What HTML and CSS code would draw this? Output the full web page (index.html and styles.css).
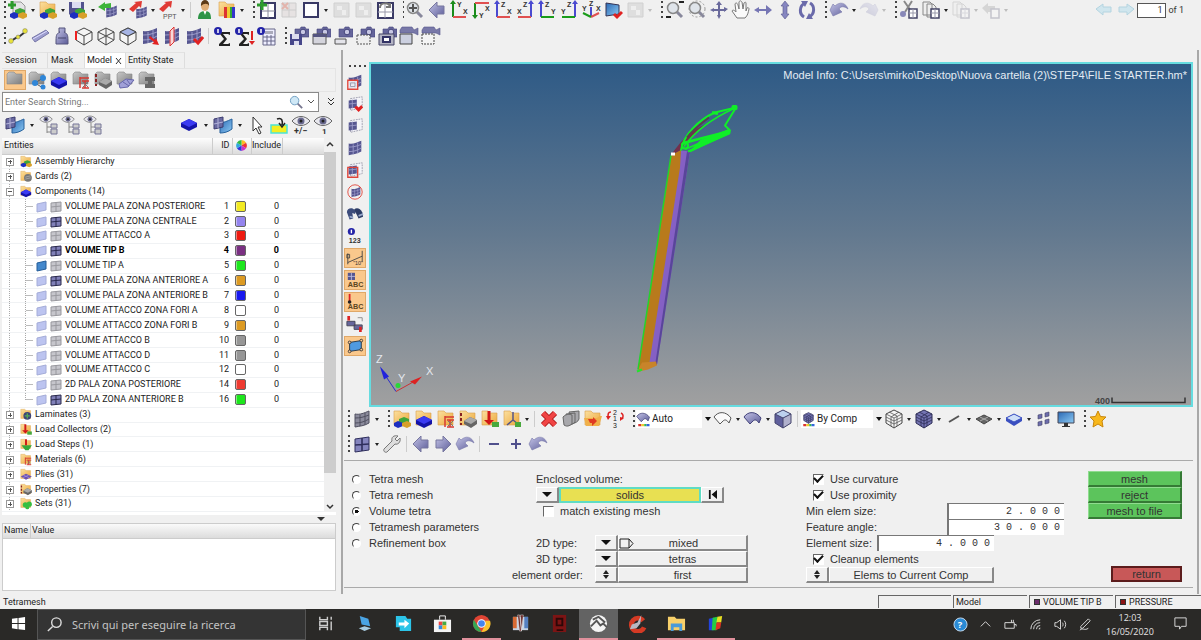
FILE: index.html
```html
<!DOCTYPE html>
<html lang="en">
<head>
<meta charset="utf-8">
<title>Tetramesh</title>
<link rel="stylesheet" href="styles.css">
</head>
<body>
<svg class="defs" aria-hidden="true">
<defs>
<linearGradient id="gf" x1="0" y1="0" x2="1" y2="1"><stop offset="0" stop-color="#fbe0a0"/><stop offset="1" stop-color="#eda93c"/></linearGradient>
<linearGradient id="gg" x1="0" y1="0" x2="1" y2="1"><stop offset="0" stop-color="#c9c9c9"/><stop offset="1" stop-color="#7d7d7d"/></linearGradient>
<linearGradient id="gp" x1="0" y1="0" x2="1" y2="1"><stop offset="0" stop-color="#c3c3e6"/><stop offset="1" stop-color="#5c5c98"/></linearGradient>
<linearGradient id="gb" x1="0" y1="0" x2="1" y2="1"><stop offset="0" stop-color="#2b69b4"/><stop offset="1" stop-color="#8ccaf4"/></linearGradient>
</defs>
<symbol id="folder" viewBox="0 0 20 20"><path d="M2 2h6l2 2h7v12H2z" fill="url(#gf)" stroke="#d9a04a" stroke-width=".6"/></symbol>
<symbol id="gfolder" viewBox="0 0 20 20"><path d="M2 4l2-2h5l2 2h6v10H2z" fill="url(#gg)" stroke="#888" stroke-width=".6"/></symbol>
<symbol id="blocks" viewBox="0 0 20 20"><path d="M7 10l5-2 5 2v3l-5 2-5-2z" fill="#3fa53a"/><path d="M2 14l4-2 5 2v3l-5 2-4-2z" fill="#1d2fc0"/><path d="M10 14l5-2 4 2v3l-4 2-5-2z" fill="#d8a02a"/></symbol>
<symbol id="bluebox" viewBox="0 0 20 20"><path d="M2 11l8-4 8 4v4l-8 4-8-4z" fill="#1414a8"/><path d="M2 11l8-4 8 4-8 4z" fill="#3a3af2"/></symbol>
<symbol id="mesh" viewBox="0 0 20 20"><path d="M3 5c5 1 9-1 14-3v12c-5 3-9 3-14 4z" fill="#565690"/><path d="M3 9c5 0 9-1 14-3M3 14c5 0 9-1 14-4M8 6v11M13 4v12" stroke="#9c9cca" fill="none"/></symbol>
<symbol id="qmesh" viewBox="0 0 20 20"><path d="M3 5l14-2v13L3 18z" fill="#8484bd" stroke="#2e2e5c"/><path d="M3 11l14-1M10 4v13" stroke="#2e2e5c" stroke-width="1.6"/></symbol>
<symbol id="gmesh" viewBox="0 0 20 20"><path d="M3 5c5 1 9-1 14-3v12c-5 3-9 3-14 4z" fill="#8b8b9c" stroke="#505060"/><path d="M3 9c5 0 9-1 14-3M3 14c5 0 9-1 14-4M8 6v11M13 4v12" stroke="#505060" fill="none"/></symbol>
<symbol id="mesh-w" viewBox="0 0 20 20"><path d="M5 4l13-2v12L5 17z" fill="#f4f4f8" stroke="#99a" stroke-dasharray="2 1"/><path d="M3 6l9-1v9l-9 1z" fill="#565690"/><path d="M3 10l9-1M7 5v10" stroke="#9c9cca"/></symbol>
<symbol id="new" viewBox="0 0 20 20"><path d="M5 2h8l4 4v10H5z" fill="#e4e4e6" stroke="#999"/><use href="#blocks"/><path d="M4 1v8M0 5h8" stroke="#2c9c2c" stroke-width="3"/></symbol>
<symbol id="open" viewBox="0 0 20 20"><use href="#folder"/><use href="#blocks"/></symbol>
<symbol id="save" viewBox="0 0 20 20"><path d="M1 2h15v14H3l-2-2z" fill="#52528e"/><path d="M4 2h9v6H4z" fill="#dcdcf2"/><use href="#blocks"/></symbol>
<symbol id="import" viewBox="0 0 20 20"><g transform="translate(6 4) scale(.75)"><use href="#mesh" width="20" height="20"/></g><path d="M14 0v5H8v3L1 4 8-1v2z" fill="#3eb53a" transform="translate(-1 3)"/></symbol>
<symbol id="rarrow" viewBox="0 0 20 20"><path d="M1 9l7-6-2-1 8-1-1 7-2-2-6 6z" fill="#e03a34"/></symbol>
<symbol id="export" viewBox="0 0 20 20"><g transform="translate(6 5) scale(.75)"><use href="#mesh" width="20" height="20"/></g><use href="#rarrow"/></symbol>
<symbol id="user" viewBox="0 0 20 20"><path d="M3 19c0-6 3-8 7-8s6 2 6 8z" fill="#2d9446"/><path d="M8 10l2 5 2-5z" fill="#fff"/><ellipse cx="10" cy="6" rx="4" ry="5" fill="#e0ae76"/><path d="M6 6c-1-8 9-8 8 0-1-3-5-3-8 0z" fill="#5c3a16"/></symbol>
<symbol id="colors" viewBox="0 0 20 20"><use href="#folder"/><path d="M7 7h3v11H7z" fill="#d33"/><path d="M10 7h3v11h-3z" fill="#ec3"/><path d="M13 7h2v11h-2z" fill="#3a3"/><path d="M15 7h3v11h-3z" fill="#33c"/></symbol>
<symbol id="winplus" viewBox="0 0 20 20"><path d="M4 3h14v15H4z" fill="#fff" stroke="#3a3a66" stroke-width="2"/><path d="M11 4v14M5 11h13" stroke="#889"/><path d="M5 0v10M0 5h10" stroke="#2c9c2c" stroke-width="3"/></symbol>
<symbol id="winx" viewBox="0 0 20 20"><path d="M3 3h14v14H3z" fill="#e6e2e2" stroke="#ccc"/><path d="M10 3v14M3 10h14" stroke="#ccc"/><path d="M3 3l6 6M9 3L3 9" stroke="#e2b4ac" stroke-width="2"/></symbol>
<symbol id="win" viewBox="0 0 20 20"><path d="M3 3h14v14H3z" fill="#fff" stroke="#3a3a66" stroke-width="2"/></symbol>
<symbol id="wingray" viewBox="0 0 20 20"><path d="M3 3h15v14H3z" fill="#dedede" stroke="#d0d0d0"/><path d="M6 6h5v4H6zM11 10h4v5h-4z" fill="#eee"/></symbol>
<symbol id="winsync" viewBox="0 0 20 20"><path d="M3 3h15v15H3z" fill="#fff" stroke="#3a3a66" stroke-width="2"/><path d="M10 3v15M3 12h15" stroke="#99a"/><path d="M5 8c0-6 9-6 10-1M15 3v4h-4" stroke="#777" stroke-width="2" fill="none"/></symbol>
<symbol id="nodes" viewBox="0 0 20 20"><path d="M3 15l5-3 4-2 5-4" stroke="#333" stroke-width="2" fill="none"/><g fill="#e8e23a" stroke="#777" stroke-width=".5"><circle cx="3" cy="15" r="2.4"/><circle cx="10" cy="11" r="2"/><circle cx="17" cy="5" r="2.4"/></g></symbol>
<symbol id="bar" viewBox="0 0 20 20"><path d="M2 12L16 4l3 3L5 16z" fill="#9d9dce" stroke="#7777a8"/><path d="M3 13l14-8" stroke="#ddf"/></symbol>
<symbol id="mass" viewBox="0 0 20 20"><path d="M7 2h6v4h-1c4 2 4 3 4 12H4C4 9 4 8 8 6H7z" fill="url(#gp)" stroke="#55557c"/><path d="M6 12h8" stroke="#44446c"/></symbol>
<symbol id="wcube" viewBox="0 0 20 20"><path d="M10 2l8 4v8l-8 5-8-5V6z" fill="#f4f4f4" stroke="#444"/><path d="M2 6l8 4 8-4M10 10v9" fill="none" stroke="#444"/></symbol>
<symbol id="cube-r" viewBox="0 0 20 20"><use href="#wcube"/><path d="M2 5v9" stroke="#e22" stroke-width="2"/></symbol>
<symbol id="cube-x" viewBox="0 0 20 20"><use href="#wcube"/><path d="M10 2v8M2 14l8-4 8 4" stroke="#555" fill="none"/></symbol>
<symbol id="cube-t" viewBox="0 0 20 20"><use href="#wcube"/><path d="M10 2l8 4-8 4-8-4z" fill="#a6b4e4" stroke="#444"/></symbol>
<symbol id="pcube" viewBox="0 0 20 20"><path d="M10 1l8 4v9l-8 5-8-5V5z" fill="#5f5f9c"/><path d="M10 1l8 4-8 4-8-4z" fill="#bcd0ee"/><path d="M10 9l8-4v9l-8 5z" fill="#b0b0cc"/><path d="M10 1l8 4v9l-8 5-8-5V5zM2 5l8 4 8-4M10 9v10" fill="none" stroke="#44446c"/></symbol>
<symbol id="rubik" viewBox="0 0 20 20"><path d="M10 1l8 4v9l-8 5-8-5V5z" fill="#f4f4f4" stroke="#444"/><path d="M2 5l8 4 8-4M10 9v10M5 3l8 4v10M15 3L7 8v9M2 8l8 4 8-4M2 11l8 4 8-4" fill="none" stroke="#555" stroke-width=".8"/></symbol>
<symbol id="prubik" viewBox="0 0 20 20"><path d="M10 1l8 4v9l-8 5-8-5V5z" fill="#7474b2" stroke="#2c2c54"/><path d="M2 5l8 4 8-4M10 9v10M5 3l8 4v10M15 3L7 8v9M2 8l8 4 8-4M2 11l8 4 8-4" fill="none" stroke="#2c2c54" stroke-width=".8"/></symbol>
<symbol id="mesh-a" viewBox="0 0 20 20"><use href="#mesh"/><path d="M10 10l5 4 1-2 3 7-7-1 2-2-5-4z" fill="#e02222"/></symbol>
<symbol id="mesh-s" viewBox="0 0 20 20"><use href="#mesh"/><path d="M8 5l4-4v15l-4 4z" fill="#f8d8d8" stroke="#d33"/></symbol>
<symbol id="mesh-c" viewBox="0 0 20 20"><use href="#mesh"/><path d="M10 13l4 4 5-6" fill="none" stroke="#e02222" stroke-width="3"/></symbol>
<symbol id="sig" viewBox="0 0 20 20"><path d="M7 6h10v3l-2-1h-5l4 5-4 5h5l2-1v3H6v-2l5-5-4-5z" fill="#222"/><circle cx="5" cy="5" r="4" fill="#2424a8"/><path d="M5 3v4" stroke="#fff" stroke-width="1.5"/></symbol>
<symbol id="sigd" viewBox="0 0 20 20"><path d="M5 6h9v3l-2-1H8l4 5-4 5h4l2-1v3H4v-2l5-5-4-5z" fill="#222"/><circle cx="4" cy="5" r="4" fill="#2424a8"/><path d="M4 3v4" stroke="#fff" stroke-width="1.5"/><path d="M17 5v9" stroke="#d22" stroke-width="2"/><path d="M17 19l-3-4h6z" fill="#d22"/></symbol>
<symbol id="calc" viewBox="0 0 20 20"><path d="M6 3h12v16H6z" fill="#eef" stroke="#668"/><path d="M8 5h8v3H8z" fill="#aab"/><path d="M6 11h12M6 15h12M10 9v10M14 9v10" stroke="#668"/><circle cx="4" cy="5" r="4" fill="#2424a8"/><path d="M4 3v4" stroke="#fff" stroke-width="1.5"/></symbol>
<symbol id="cam" viewBox="0 0 20 20"><path d="M6 3h5l1-2h4l1 2h3v8H6z" fill="#66669c" stroke="#44447a" stroke-width=".6"/><circle cx="14" cy="6" r="2.800" fill="#c8c8e4" stroke="#44447a"/></symbol>
<symbol id="cam1" viewBox="0 0 20 20"><use href="#cam"/><path d="M1 8h12v11H1z" fill="#47478a"/><path d="M3 8h7v5H3zM5 15h5v4H5z" fill="#dde"/></symbol>
<symbol id="cam2" viewBox="0 0 20 20"><use href="#cam"/><path d="M2 8h13v10H2z" fill="#d4d4dc" stroke="#555"/><path d="M2 8h13v3H2z" fill="#555580"/></symbol>
<symbol id="cam3" viewBox="0 0 20 20"><use href="#cam"/><path d="M2 13h11v5H2z" fill="#e4e4ea" stroke="#555"/></symbol>
<symbol id="cam4" viewBox="0 0 20 20"><use href="#cam"/><path d="M2 9h13v9H2z" fill="#eee" stroke="#555" stroke-dasharray="2 1"/></symbol>
<symbol id="cam5" viewBox="0 0 20 20"><use href="#cam"/><path d="M2 8h15v11H2z" fill="#b4b4c4" stroke="#446"/><path d="M6 11h7v5H6z" fill="#fff" stroke="#336" stroke-width="2"/></symbol>
<symbol id="vid" viewBox="0 0 20 20"><path d="M1 4l2-3h10l2 3 4-2v7l-4-2H1z" fill="#7878a8" stroke="#55558a" stroke-width=".6"/><path d="M1 8h12v10H1z" fill="#ccd0e0" stroke="#444"/></symbol>
<symbol id="vid2" viewBox="0 0 20 20"><path d="M1 4l2-3h10l2 3 4-2v7l-4-2H1z" fill="#7878a8" stroke="#55558a" stroke-width=".6"/><path d="M1 8h12v10H1z" fill="#f4f4f4" stroke="#444" stroke-dasharray="2 1"/></symbol>
<symbol id="mag" viewBox="0 0 20 20"><path d="M11 11l6 6" stroke="#88889c" stroke-width="3"/><circle cx="8" cy="8" r="5.500" fill="#dfe4ea" stroke="#888" stroke-width="1.500"/></symbol>
<symbol id="fit" viewBox="0 0 20 20"><use href="#mag"/><path d="M8 4v8M4 8h8" stroke="#555" stroke-width="2"/></symbol>
<symbol id="magm" viewBox="0 0 20 20"><use href="#mag"/><path d="M14 2h5M1 17h5" stroke="#222" stroke-width="2"/></symbol>
<symbol id="magc" viewBox="0 0 20 20"><use href="#mag"/><circle cx="10" cy="9" r="8" fill="none" stroke="#999" stroke-dasharray="2 2"/></symbol>
<symbol id="back" viewBox="0 0 20 20"><path d="M2 10l8-8v4h7v8h-7v4z" fill="url(#gp)" stroke="#77779f"/></symbol>
<symbol id="fwd" viewBox="0 0 20 20"><path d="M18 10l-8-8v4H3v8h7v4z" fill="url(#gp)" stroke="#77779f"/></symbol>
<symbol id="cross" viewBox="0 0 20 20"><path d="M10 3v14M3 10h14" stroke="#6a6a9c" stroke-width="2"/><path d="M10 1l3 4H7zM10 19l-2-4h4zM1 10l4-2v4zM19 9l-4-2v5z" fill="#6a6a9c"/></symbol>
<symbol id="hand" viewBox="0 0 20 20"><path d="M6 18l-5-7c1-2 3 0 4 1L4 4c1-2 2-1 3 1l1 4V2c1-2 2-1 3 0l1 7 1-6c1-1 2-1 2 0v8l1-3c1-1 2 0 2 1-1 4-1 6-4 9z" fill="#fafafa" stroke="#777"/></symbol>
<symbol id="lr" viewBox="0 0 20 20"><path d="M1 10l5-3v2h7V5l6 5-6 5v-4H6v2z" fill="#7676b4"/></symbol>
<symbol id="ud" viewBox="0 0 20 20"><path d="M10 1l4 5h-2v8h2l-4 5-4-5h2V6H6z" fill="#8686c0" stroke="#55558a" stroke-width=".6"/></symbol>
<symbol id="rot" viewBox="0 0 20 20"><path d="M8 3c-6 3-6 11-1 14M12 17c6-3 6-11 1-14" fill="none" stroke="#6a6aaa" stroke-width="3"/><path d="M4 1h7L8 7zM16 19H9l3-6z" fill="#6a6aaa"/></symbol>
<symbol id="undo" viewBox="0 0 20 20"><path d="M1 10l3-6 2 2c5-5 11-3 13 3-4-3-7-3-9 0l3 3-9 4z" fill="url(#gp)" stroke="#7777aa" stroke-width=".6"/></symbol>
<symbol id="cut" viewBox="0 0 20 20"><path d="M5 1l7 10M13 1L6 12" stroke="#888" stroke-width="2"/><circle cx="4" cy="14" r="3" fill="#8888b8"/><path d="M10 9h8v9h-8z" fill="#fff" stroke="#446" stroke-width="1.5"/><path d="M14 9v9M10 13h8" stroke="#99a"/></symbol>
<symbol id="copy" viewBox="0 0 20 20"><path d="M2 2h7l2 2v11H2zM6 4h6l3 3v10H6z" fill="#eee" stroke="#888"/><path d="M10 9h8v9h-8z" fill="#fff" stroke="#446" stroke-width="1.5"/><path d="M14 9v9M10 13h8" stroke="#99a"/></symbol>
<symbol id="screen" viewBox="0 0 20 20"><path d="M3 3l13 2v9L3 16z" fill="url(#gb)" stroke="#335"/><path d="M11 14l3 3 5-5" stroke="#e02222" stroke-width="3" fill="none"/></symbol>
<symbol id="share" viewBox="0 0 20 20"><use href="#gfolder"/><path d="M8 13l8-5M8 13l8 5" stroke="#555"/><g fill="#2f86d8"><circle cx="8" cy="13" r="3"/><circle cx="16" cy="8" r="3"/><circle cx="16" cy="17" r="2.500"/></g></symbol>
<symbol id="gf-b" viewBox="0 0 20 20"><use href="#gfolder"/><use href="#bluebox"/></symbol>
<symbol id="ibeam" viewBox="0 0 20 20"><path d="M9 7v11M9 8h9M11 11h7M14 11v7M11 18h7" stroke="#d63a32" stroke-width="1.500"/><path d="M12 12l5 5M17 12l-5 5" stroke="#777"/></symbol>
<symbol id="gf-i" viewBox="0 0 20 20"><use href="#gfolder"/><use href="#ibeam"/></symbol>
<symbol id="prop" viewBox="0 0 20 20"><path d="M6 12l6-4 7 3v4l-6 4-7-4z" fill="#666"/><path d="M6 12l6-4 7 3-6 4z" fill="#aaa"/><path d="M3 4v12" stroke="#822" stroke-dasharray="3 2" stroke-width="2"/></symbol>
<symbol id="gf-p" viewBox="0 0 20 20"><use href="#gfolder"/><use href="#prop"/></symbol>
<symbol id="gf-m" viewBox="0 0 20 20"><use href="#gfolder"/><path d="M4 14l7-5 8 1-6 7-8 1z" fill="#a0a0d8" stroke="#66a"/><path d="M8 12l6 4M12 10l3 4" stroke="#66a"/></symbol>
<symbol id="gf-t" viewBox="0 0 20 20"><use href="#gfolder"/><path d="M8 7h10v4h-3v3h3v4H8v-4h3v-3H8z" fill="#666"/></symbol>
<symbol id="surf" viewBox="0 0 20 20"><path d="M7 7c4 1 7-1 12-3v10c-4 3-8 4-12 4z" fill="url(#gb)" stroke="#26619c"/><path d="M1 4l9-2v10l-9 2z" fill="#6a6aa2" stroke="#3c3c70"/><path d="M5 3v10M1 9l9-2" stroke="#b4b4da"/></symbol>
<symbol id="eye" viewBox="0 0 20 20"><path d="M1 6c5-6 13-6 18 0-5 6-13 6-18 0z" fill="#e8e8ee" stroke="#666"/><circle cx="10" cy="6" r="3.500" fill="#6a6a90"/><circle cx="10" cy="6" r="1.500" fill="#222"/></symbol>
<symbol id="eye-t" viewBox="0 0 20 20"><g transform="scale(.7)"><use href="#eye" width="20" height="20"/></g><path d="M8 8v10M8 12h4M8 17h4" stroke="#888"/><path d="M12 9h6v4h-6zM12 14h6v5h-6z" fill="#ccc" stroke="#779"/></symbol>
<symbol id="cursor" viewBox="0 0 20 20"><path d="M6 2v14l3-3 3 6 2-1-3-6h4z" fill="#fff" stroke="#333"/></symbol>
<symbol id="pick" viewBox="0 0 20 20"><path d="M2 10h16v8H2z" fill="#f2ee22" stroke="#4ce4d4" stroke-width="1.500"/><path d="M8 4c5-2 6 2 5 6M10 8l3 4 3-4" stroke="#222" stroke-width="1.500" fill="none"/></symbol>
<symbol id="dgrid" viewBox="0 0 20 20"><use href="#mesh"/><path d="M2 8h11v10H2z" fill="#ffffffd0" stroke="#e0453a" stroke-width="1.500"/><path d="M5 11h5v4H5z" fill="none" stroke="#99a"/></symbol>
<symbol id="sgrid" viewBox="0 0 20 20"><use href="#mesh-w"/><path d="M2 7h11v11H2z" fill="none" stroke="#e0453a" stroke-width="1.500"/></symbol>
<symbol id="cgrid" viewBox="0 0 20 20"><g transform="translate(4 3) scale(.7)"><use href="#mesh" width="20" height="20"/></g><circle cx="10" cy="10" r="8" fill="none" stroke="#e0453a"/></symbol>
<symbol id="heart" viewBox="0 0 20 20"><use href="#mesh-w"/><path d="M14 19l-5-5 3-2 2 2 3-3 2 3z" fill="#e02222"/></symbol>
<symbol id="bino" viewBox="0 0 20 20"><path d="M1 8c0-4 5-6 8-3l2 2-1 3-3-1 1 6-4 1z" fill="#3c4c7c"/><path d="M9 5c3-3 7-1 9 3l1 5-5 2-3-6z" fill="#2d3c66"/><path d="M4 13l4 1M14 12l5-2" stroke="#9ac" stroke-width="2"/></symbol>
<symbol id="bc" viewBox="0 0 20 20"><path d="M1 7h9v5H1zM9 11h9v5H9z" fill="#66669c" stroke="#445"/><path d="M3 1v5M16 13v6" stroke="#d22" stroke-width="3"/><path d="M13 3h5v4" stroke="#888" fill="none"/></symbol>
<symbol id="quad" viewBox="0 0 20 20"><path d="M4 6l13-2v10L4 16z" fill="#4f9ae0" stroke="#234"/><g fill="#fc9" stroke="#333"><circle cx="4" cy="6" r="1.500"/><circle cx="17" cy="4" r="1.500"/><circle cx="17" cy="14" r="1.500"/><circle cx="4" cy="16" r="1.500"/></g></symbol>
<symbol id="f-b" viewBox="0 0 20 20"><use href="#folder"/><use href="#bluebox"/></symbol>
<symbol id="f-i" viewBox="0 0 20 20"><use href="#folder"/><use href="#ibeam"/></symbol>
<symbol id="f-p" viewBox="0 0 20 20"><use href="#folder"/><use href="#prop"/></symbol>
<symbol id="f-l" viewBox="0 0 20 20"><use href="#folder"/><path d="M9 2v10" stroke="#d01818" stroke-width="3"/><path d="M9 16l-5-5h10z" fill="#d01818"/><path d="M12 13h7v5h-7z" fill="#48a83c"/></symbol>
<symbol id="f-s" viewBox="0 0 20 20"><use href="#folder"/><path d="M3 11h16l-5 8H9z" fill="#34a83c"/><path d="M10 2v9" stroke="#d01818" stroke-width="3"/></symbol>
<symbol id="f-set" viewBox="0 0 20 20"><use href="#folder"/><g fill="#36bf42"><circle cx="9" cy="12" r="4"/><circle cx="15" cy="11" r="4"/><circle cx="12" cy="16" r="3"/></g></symbol>
<symbol id="f-lam" viewBox="0 0 20 20"><use href="#folder"/><circle cx="12" cy="12" r="6" fill="#3c4478"/><path d="M8 12h8M12 8v8" stroke="#5a5" stroke-width="2"/></symbol>
<symbol id="f-ply" viewBox="0 0 20 20"><use href="#folder"/><path d="M2 13l8-4 9 4-9 5z" fill="#6a50b4"/><path d="M5 15l9-4M6 11l9 4" stroke="#a9d"/></symbol>
<symbol id="f-c" viewBox="0 0 20 20"><use href="#folder"/><circle cx="13" cy="12" r="6" fill="#777"/><path d="M9 11l8-2M9 14l8-2" stroke="#bbb"/></symbol>
<symbol id="f-ax" viewBox="0 0 20 20"><use href="#folder"/><path d="M11 3v8l-6 5M11 11l5 4" stroke="#558" stroke-width="1.500" fill="none"/><path d="M13 13h6v5h-6z" fill="#48a83c"/></symbol>
<symbol id="del" viewBox="0 0 20 20"><path d="M4 4l12 12M16 4L4 16" stroke="#b01c1c" stroke-width="6"/><path d="M4 4l12 12M16 4L4 16" stroke="#f04444" stroke-width="4"/></symbol>
<symbol id="stack" viewBox="0 0 20 20"><g fill="#a8a8ac" stroke="#666"><path d="M8 3l10-1v8c-1 3-4 4-7 5z"/><path d="M5 5l9-1v9c-2 2-4 3-7 3z"/><path d="M2 8c3-3 6-3 9-2v9c-3 2-5 3-8 1z"/></g></symbol>
<symbol id="f-org" viewBox="0 0 20 20"><use href="#folder"/><path d="M1 9h13l3-2h2l-3 10H3z" fill="#f0b04a"/><path d="M5 10h5V8l4 4-5 5v-3H7z" fill="#e03a22"/></symbol>
<symbol id="pshell" viewBox="0 0 20 20"><path d="M1 8c4-6 12-6 17 1l-2 5c-2-3-4-4-6-2l-3 3z" fill="url(#gp)" stroke="#44447a"/></symbol>
<symbol id="wshell" viewBox="0 0 20 20"><path d="M1 8c4-6 12-6 17 1l-2 5c-2-3-4-4-6-2l-3 3z" fill="#fafafa" stroke="#555"/></symbol>
<symbol id="rain" viewBox="0 0 20 20"><path d="M3 16h4v3H3z" fill="#d33"/><path d="M7 16h4v3H7z" fill="#ec3"/><path d="M11 16h3v3h-3z" fill="#3b5"/><path d="M14 16h4v3h-4z" fill="#36d"/></symbol>
<symbol id="auto" viewBox="0 0 20 20"><g transform="translate(0 -2)"><use href="#pshell" width="20" height="20"/></g><use href="#rain"/></symbol>
<symbol id="comp" viewBox="0 0 20 20"><g transform="translate(2 0) scale(.8)"><use href="#prubik" width="20" height="20"/></g><use href="#rain"/></symbol>
<symbol id="dash" viewBox="0 0 20 20"><path d="M5 13l10-6" stroke="#555" stroke-width="2"/></symbol>
<symbol id="rhomb" viewBox="0 0 20 20"><path d="M2 10l8-4 8 4-8 5z" fill="#666" stroke="#444"/><path d="M6 12l8-4M6 8l8 4" stroke="#aaa"/></symbol>
<symbol id="slab" viewBox="0 0 20 20"><path d="M2 9l8-4 8 4v3l-8 5-8-5z" fill="#3a4fc0"/><path d="M2 9l8-4 8 4-8 4z" fill="#cfe0f8" stroke="#3a4fc0"/></symbol>
<symbol id="shrink" viewBox="0 0 20 20"><path d="M4 6l4-1v4l-4 1zM11 4l4-1v4l-4 1zM4 13l4-1v4l-4 1zM11 11l4-1v4l-4 1z" fill="#6c6cac" stroke="#446" stroke-width=".6"/></symbol>
<symbol id="monitor" viewBox="0 0 20 20"><path d="M2 3h16v11H2z" fill="url(#gb)" stroke="#445"/><path d="M8 14h4v3h2v1H6v-1h2z" fill="#333"/></symbol>
<symbol id="star" viewBox="0 0 20 20"><path d="M10 2l2.500 5.500 5.500.5-4 4 1 6-5-3-5 3 1-6-4-4 5.500-.5z" fill="#f8b81c" stroke="#c8860a"/></symbol>
<symbol id="wrench" viewBox="0 0 20 20"><path d="M2 15l8-8c-1-4 2-6 6-5l-3 3 2 2 3-3c1 4-2 7-5 6l-8 8c-2 1-4-1-3-3z" fill="#ddd" stroke="#777"/></symbol>
<symbol id="minus" viewBox="0 0 20 20"><path d="M5 10h10" stroke="#50508c" stroke-width="2"/></symbol>
<symbol id="plus" viewBox="0 0 20 20"><path d="M5 10h10M10 5v10" stroke="#50508c" stroke-width="2"/></symbol>
<symbol id="sl" viewBox="0 0 12 12"><path d="M1 3l9-2v8l-9 2z" fill="#bcc4f0" stroke="#a4acd8"/></symbol>
<symbol id="sd" viewBox="0 0 12 12"><path d="M1 3l9-2v8l-9 2z" fill="#4488cc" stroke="#245c98"/></symbol>
<symbol id="ml" viewBox="0 0 12 12"><path d="M1 2l10-1v9L1 11z" fill="#c6c6cc" stroke="#98989e"/><path d="M1 6l10-1M6 1v10" stroke="#98989e"/></symbol>
<symbol id="md" viewBox="0 0 12 12"><path d="M1 2l10-1v9L1 11z" fill="#8080b8" stroke="#28284c"/><path d="M1 6l10-1M6 1v10" stroke="#28284c"/></symbol>
<symbol id="wheel" viewBox="0 0 12 12"><path d="M6 6V0a6 6 0 0 1 5 3z" fill="#fb2"/><path d="M6 6l5-3a6 6 0 0 1 0 6z" fill="#e33"/><path d="M6 6l5 3a6 6 0 0 1-5 3z" fill="#c3c"/><path d="M6 6v6a6 6 0 0 1-5-3z" fill="#33d"/><path d="M6 6L1 9a6 6 0 0 1 0-6z" fill="#3ad"/><path d="M6 6L1 3a6 6 0 0 1 5-3z" fill="#3b4"/></symbol>
</svg>

<header class="bars">
<div class="bar">
<div class="grp"><i class="grip"></i>
<button title="New"><svg><use href="#new"/></svg></button><i class="car"></i>
<button title="Open"><svg><use href="#open"/></svg></button><i class="car"></i>
<button title="Save"><svg><use href="#save"/></svg></button><i class="car"></i>
<button title="Import"><svg><use href="#import"/></svg></button><i class="car"></i>
<button title="Export"><svg><use href="#export"/></svg></button><i class="car"></i>
<button title="Publish"><svg viewBox="0 0 20 20"><use href="#rarrow"/><text x="5" y="19" font-size="7" fill="#555">PPT</text></svg></button><i class="car"></i><i class="sep"></i>
<button title="User profile"><svg><use href="#user"/></svg></button>
<button title="Colors"><svg><use href="#colors"/></svg></button><i class="car"></i></div>
<div class="grp"><i class="grip"></i>
<button title="Add page"><svg><use href="#winplus"/></svg></button>
<button title="Delete page"><svg><use href="#winx"/></svg></button>
<button title="Page layout"><svg><use href="#win"/></svg></button><i class="car"></i>
<button title="Swap"><svg><use href="#wingray"/></svg></button>
<button title="Expand"><svg><use href="#wingray"/></svg></button>
<button title="Synchronize"><svg><use href="#winsync"/></svg></button></div>
<div class="grp axes"><i class="grip g1"></i>
<button title="Fit"><svg><use href="#fit"/></svg></button>
<button title="Previous view"><svg><use href="#back"/></svg></button>
<button title="XY top"><svg viewBox="0 0 20 20"><path d="M4 2v15" stroke="#1a8c1a" stroke-width="2"/><path d="M4 17h13" stroke="#e05050" stroke-width="2"/><path d="M4 0l3 4H1z" fill="#1a8c1a"/><text x="8" y="7">Y</text><text x="14" y="14">X</text></svg></button>
<button title="XY bottom"><svg viewBox="0 0 20 20"><path d="M4 3v14" stroke="#1a8c1a" stroke-width="2"/><path d="M4 3h14" stroke="#e05050" stroke-width="2"/><path d="M4 19l3-4H1z" fill="#1a8c1a"/><text x="14" y="11">X</text><text x="8" y="18">Y</text></svg></button>
<button title="XZ left"><svg viewBox="0 0 20 20"><path d="M4 2v15" stroke="#4a4ad0" stroke-width="2"/><path d="M4 17h13" stroke="#e05050" stroke-width="2"/><path d="M4 0l3 4H1z" fill="#4a4ad0"/><text x="8" y="7">Z</text><text x="14" y="14">X</text></svg></button>
<button title="XZ right"><svg viewBox="0 0 20 20"><path d="M16 2v15" stroke="#4a4ad0" stroke-width="2"/><path d="M3 17h13" stroke="#e05050" stroke-width="2"/><path d="M16 0l3 4h-6z" fill="#4a4ad0"/><text x="8" y="7">Z</text><text x="2" y="14">X</text></svg></button>
<button title="YZ left"><svg viewBox="0 0 20 20"><path d="M4 2v15" stroke="#4a4ad0" stroke-width="2"/><path d="M4 17h13" stroke="#1a9c1a" stroke-width="2"/><path d="M4 0l3 4H1z" fill="#4a4ad0"/><text x="8" y="7">Z</text><text x="14" y="14">Y</text></svg></button>
<button title="YZ right"><svg viewBox="0 0 20 20"><path d="M16 2v15" stroke="#4a4ad0" stroke-width="2"/><path d="M3 17h13" stroke="#1a9c1a" stroke-width="2"/><path d="M16 0l3 4h-6z" fill="#4a4ad0"/><text x="8" y="7">Z</text><text x="2" y="14">Y</text></svg></button>
<button title="Isometric"><svg viewBox="0 0 20 20"><path d="M10 7v10" stroke="#4a4ad0" stroke-width="2"/><path d="M10 17l8-4" stroke="#e05050" stroke-width="2"/><path d="M10 17l-8-4" stroke="#1a9c1a" stroke-width="2"/><text x="8" y="6">Z</text><text x="1" y="11">Y</text><text x="15" y="11">X</text></svg></button>
<button title="Screen view"><svg><use href="#screen"/></svg></button>
<button title="Saved view" disabled><svg><use href="#wingray"/></svg></button><i class="car dim"></i></div>
<div class="grp"><i class="grip"></i>
<button title="Zoom out"><svg><use href="#magm"/></svg></button>
<button title="Circle zoom"><svg><use href="#magc"/></svg></button>
<button title="Center"><svg><use href="#cross"/></svg></button>
<button title="Pan"><svg><use href="#hand"/></svg></button>
<button title="Rotate left-right"><svg><use href="#lr"/></svg></button>
<button title="Rotate up-down"><svg><use href="#ud"/></svg></button>
<button title="Spin"><svg><use href="#rot"/></svg></button></div>
<div class="grp"><i class="grip"></i>
<button title="Undo"><svg><use href="#undo"/></svg></button><i class="car"></i>
<button title="Redo" class="dim"><svg class="flip"><use href="#undo"/></svg></button><i class="car dim"></i></div>
<div class="grp"><i class="grip"></i>
<button title="Cut"><svg><use href="#cut"/></svg></button>
<button title="Copy"><svg><use href="#copy"/></svg></button><i class="car"></i>
<button title="Paste" class="dim"><svg><use href="#copy"/></svg></button><i class="car dim"></i>
<button title="Overlay" class="dim"><svg viewBox="0 0 20 20"><path d="M1 8l6-5v3h7v6H7v2z" fill="#888"/><path d="M10 9h8v9h-8z" fill="#fff" stroke="#446" stroke-width="1.500"/></svg></button><i class="car dim"></i></div>
<div class="pager">
<button title="Previous page" class="pg"><svg viewBox="0 0 20 20"><path d="M2 9l7-5v3h8v5H9v3z" fill="#d0e6ee" stroke="#b4d4e0"/></svg></button>
<button title="Next page" class="pg"><svg viewBox="0 0 20 20"><path d="M18 9l-7-5v3H3v5h8v3z" fill="#d0e6ee" stroke="#b4d4e0"/></svg></button>
<input id="page" value="1" aria-label="Page"><label for="page">of 1</label></div>
</div>
<div class="bar">
<div class="grp"><i class="grip"></i>
<button title="Nodes"><svg><use href="#nodes"/></svg></button>
<button title="Bars"><svg><use href="#bar"/></svg></button>
<button title="Mass"><svg><use href="#mass"/></svg></button>
<button title="Edges"><svg><use href="#cube-r"/></svg></button>
<button title="Features"><svg><use href="#cube-x"/></svg></button>
<button title="Faces"><svg><use href="#cube-t"/></svg></button>
<button title="Normals"><svg><use href="#mesh-a"/></svg></button>
<button title="Penetration"><svg><use href="#mesh-s"/></svg></button>
<button title="Check elements"><svg><use href="#mesh-c"/></svg></button><i class="sep"></i>
<button title="Summary"><svg><use href="#sig"/></svg></button>
<button title="Load summary"><svg><use href="#sigd"/></svg></button>
<button title="Calculator"><svg><use href="#calc"/></svg></button></div>
<div class="grp"><i class="grip"></i>
<button title="Capture to file"><svg><use href="#cam1"/></svg></button>
<button title="Capture window"><svg><use href="#cam2"/></svg></button>
<button title="Capture panel"><svg><use href="#cam3"/></svg></button>
<button title="Capture region"><svg><use href="#cam4"/></svg></button>
<button title="Capture page"><svg><use href="#cam5"/></svg></button>
<button title="Record window"><svg><use href="#vid"/></svg></button>
<button title="Record region"><svg><use href="#vid2"/></svg></button></div>
</div>
</header>

<main class="work">
<aside class="side">
<nav class="tabs"><button>Session</button><button>Mask</button><button class="on">Model<svg viewBox="0 0 8 8"><path d="M1 1l5 6M6 1L1 7" stroke="#333"/></svg></button><button>Entity State</button></nav>
<div class="views">
<button class="on" title="Model view"><svg><use href="#gfolder"/></svg></button>
<button title="Assembly view"><svg><use href="#share"/></svg></button>
<button title="Component view"><svg><use href="#gf-b"/></svg></button>
<button title="Material view"><svg><use href="#gf-i"/></svg></button>
<button title="Property view"><svg><use href="#gf-p"/></svg></button>
<button title="Ply view"><svg><use href="#gf-m"/></svg></button>
<button title="Load view"><svg><use href="#gf-t"/></svg></button>
</div>
<div class="search"><div class="sbox"><input placeholder="Enter Search String..." aria-label="Search"><svg class="m" viewBox="0 0 16 16"><path d="M9 9l5 5" stroke="#777790" stroke-width="2"/><circle cx="6" cy="6" r="4.500" fill="#cfe8f6" stroke="#6c9cc0"/></svg><svg class="v" viewBox="0 0 8 8"><path d="M1 2l3 3 3-3" fill="none" stroke="#555"/></svg></div><svg class="v" viewBox="0 0 8 8"><path d="M1 0l3 3 3-3M1 4l3 3 3-3" fill="none" stroke="#333"/></svg></div>
<div class="tools">
<button title="Show entities"><svg><use href="#surf"/></svg></button><i class="car wide"></i>
<button title="Show all"><svg><use href="#eye-t"/></svg></button>
<button title="Hide all"><svg><use href="#eye-t"/></svg></button>
<button title="Reverse"><svg><use href="#eye-t"/></svg></button>
<span class="fill"></span>
<button title="Components"><svg viewBox="0 3 20 20"><use href="#bluebox" width="20" height="20"/></svg></button><i class="car wide"></i>
<button title="Geometry and elements"><svg><use href="#surf"/></svg></button><i class="car wide"></i>
<button title="Select"><svg><use href="#cursor"/></svg></button>
<button title="Pick"><svg><use href="#pick"/></svg></button>
<button title="Toggle display"><svg viewBox="0 0 20 20"><use href="#eye"/><text x="3" y="19" font-size="9" font-weight="bold" fill="#333">+/−</text></svg></button>
<button title="Isolate"><svg viewBox="0 0 20 20"><use href="#eye"/><text x="9" y="19" font-size="8" font-weight="bold" fill="#333">1</text></svg></button>
</div>
<div class="tree">
<table>
<thead><tr><th class="c1">Entities</th><th class="c2">ID</th><th class="c3"><svg><use href="#wheel"/></svg></th><th class="c4">Include</th><th></th></tr></thead>
<tbody>
<tr><td class="p first"><b class="box"></b><svg><use href="#open"/></svg>Assembly Hierarchy</td><td></td><td></td><td></td><td></td></tr>
<tr><td class="p"><b class="box"></b><svg><use href="#f-c"/></svg>Cards (2)</td><td></td><td></td><td></td><td></td></tr>
<tr><td class="p"><b class="box open"></b><svg><use href="#f-b"/></svg>Components (14)</td><td></td><td></td><td></td><td></td></tr>
<tr><td class="k"><svg><use href="#sl"/></svg><svg><use href="#ml"/></svg>VOLUME PALA ZONA POSTERIORE</td><td>1</td><td><i class="sw yel"></i></td><td>0</td><td></td></tr>
<tr><td class="k"><svg><use href="#sl"/></svg><svg><use href="#md"/></svg>VOLUME PALA ZONA CENTRALE</td><td>2</td><td><i class="sw lil"></i></td><td>0</td><td></td></tr>
<tr><td class="k"><svg><use href="#sl"/></svg><svg><use href="#ml"/></svg>VOLUME ATTACCO A</td><td>3</td><td><i class="sw red"></i></td><td>0</td><td></td></tr>
<tr class="cur"><td class="k"><svg><use href="#sl"/></svg><svg><use href="#md"/></svg>VOLUME TIP B</td><td>4</td><td><i class="sw pur"></i></td><td>0</td><td></td></tr>
<tr><td class="k"><svg><use href="#sd"/></svg><svg><use href="#ml"/></svg>VOLUME TIP A</td><td>5</td><td><i class="sw grn"></i></td><td>0</td><td></td></tr>
<tr><td class="k"><svg><use href="#sl"/></svg><svg><use href="#md"/></svg>VOLUME PALA ZONA ANTERIORE A</td><td>6</td><td><i class="sw ora"></i></td><td>0</td><td></td></tr>
<tr><td class="k"><svg><use href="#sl"/></svg><svg><use href="#ml"/></svg>VOLUME PALA ZONA ANTERIORE B</td><td>7</td><td><i class="sw blu"></i></td><td>0</td><td></td></tr>
<tr><td class="k"><svg><use href="#sl"/></svg><svg><use href="#ml"/></svg>VOLUME ATTACCO ZONA FORI A</td><td>8</td><td><i class="sw"></i></td><td>0</td><td></td></tr>
<tr><td class="k"><svg><use href="#sl"/></svg><svg><use href="#ml"/></svg>VOLUME ATTACCO ZONA FORI B</td><td>9</td><td><i class="sw ora"></i></td><td>0</td><td></td></tr>
<tr><td class="k"><svg><use href="#sl"/></svg><svg><use href="#ml"/></svg>VOLUME ATTACCO B</td><td>10</td><td><i class="sw gry"></i></td><td>0</td><td></td></tr>
<tr><td class="k"><svg><use href="#sl"/></svg><svg><use href="#ml"/></svg>VOLUME ATTACCO D</td><td>11</td><td><i class="sw gry"></i></td><td>0</td><td></td></tr>
<tr><td class="k"><svg><use href="#sl"/></svg><svg><use href="#ml"/></svg>VOLUME ATTACCO C</td><td>12</td><td><i class="sw"></i></td><td>0</td><td></td></tr>
<tr><td class="k"><svg><use href="#sl"/></svg><svg><use href="#ml"/></svg>2D PALA ZONA POSTERIORE</td><td>14</td><td><i class="sw cor"></i></td><td>0</td><td></td></tr>
<tr><td class="k last"><svg><use href="#sl"/></svg><svg><use href="#md"/></svg>2D PALA ZONA ANTERIORE B</td><td>16</td><td><i class="sw grn"></i></td><td>0</td><td></td></tr>
<tr><td class="p"><b class="box"></b><svg><use href="#f-lam"/></svg>Laminates (3)</td><td></td><td></td><td></td><td></td></tr>
<tr><td class="p"><b class="box"></b><svg><use href="#f-l"/></svg>Load Collectors (2)</td><td></td><td></td><td></td><td></td></tr>
<tr><td class="p"><b class="box"></b><svg><use href="#f-s"/></svg>Load Steps (1)</td><td></td><td></td><td></td><td></td></tr>
<tr><td class="p"><b class="box"></b><svg><use href="#f-i"/></svg>Materials (6)</td><td></td><td></td><td></td><td></td></tr>
<tr><td class="p"><b class="box"></b><svg><use href="#f-ply"/></svg>Plies (31)</td><td></td><td></td><td></td><td></td></tr>
<tr><td class="p"><b class="box"></b><svg><use href="#f-p"/></svg>Properties (7)</td><td></td><td></td><td></td><td></td></tr>
<tr><td class="p"><b class="box"></b><svg><use href="#f-set"/></svg>Sets (31)</td><td></td><td></td><td></td><td></td></tr>
</tbody>
</table>
<div class="scroll"><svg viewBox="0 0 8 8"><path d="M1 5l3-3 3 3" fill="none" stroke="#333" stroke-width="1.500"/></svg><div class="thumb"></div><svg viewBox="0 0 8 8"><path d="M1 2l3 3 3-3" fill="none" stroke="#333" stroke-width="1.500"/></svg></div>
</div>
<div class="split"><svg viewBox="0 0 8 4"><path d="M0 0h8L4 4z" fill="#333"/></svg></div>
<div class="props"><div class="ph"><span>Name</span><span>Value</span></div></div>
</aside>

<section class="right">
<div class="stage">
<div class="vbar"><i class="hgrip"></i>
<button title="Unmask shown"><svg><use href="#dgrid"/></svg></button>
<button title="Mask"><svg><use href="#heart"/></svg></button>
<button title="Reverse mask"><svg><use href="#mesh-w"/></svg></button>
<button title="Unmask all"><svg><use href="#mesh"/></svg></button>
<button title="Mask outside"><svg><use href="#sgrid"/></svg></button>
<button title="Spherical clip"><svg><use href="#cgrid"/></svg></button>
<button title="Find"><svg><use href="#bino"/></svg></button>
<button title="Numbers"><svg viewBox="0 0 20 20"><circle cx="6" cy="5" r="4" fill="#2424a8"/><path d="M6 3v4" stroke="#fff" stroke-width="1.500"/><text x="3" y="18" font-size="8" font-weight="bold" fill="#333">123</text></svg></button>
<button title="Measures" class="on"><svg viewBox="0 0 20 20"><path d="M2 5v12M18 2v12M2 15l16-7" stroke="#444"/><path d="M1 6h3v4H1z" fill="none" stroke="#444"/><text x="8" y="18" font-size="6" fill="#333">"10"</text></svg></button>
<button title="Entity labels" class="on"><svg viewBox="0 0 20 20"><path d="M2 2h8v8H2z" fill="#565690"/><path d="M6 2v8M2 6h8" stroke="#b9b9dc"/><text x="2" y="18" font-size="8" font-weight="bold" fill="#5c461e">ABC</text></svg></button>
<button title="Load labels" class="on"><svg viewBox="0 0 20 20"><path d="M4 1v9" stroke="#d22" stroke-width="2"/><circle cx="4" cy="10" r="2" fill="#222"/><text x="2" y="18" font-size="8" font-weight="bold" fill="#5c461e">ABC</text></svg></button>
<button title="Load handles"><svg><use href="#bc"/></svg></button>
<button title="Fixed points" class="on"><svg><use href="#quad"/></svg></button>
</div>
<div class="view">
<p class="info">Model Info: C:\Users\mirko\Desktop\Nuova cartella (2)\STEP4\FILE STARTER.hm*</p>
<svg class="scene" viewBox="371 64 820 340">
<path d="M681 150l9 1-33 213-9 4z" fill="#8560c4"/>
<path d="M687 151l3 0-33 213-2 1z" fill="#59459a"/>
<path d="M671 155l10-6-1 18-31 198-9 6-2-2z" fill="#b87a1c"/>
<path d="M638 369l4-7 14-1 1 4-9 4-9 2z" fill="#c8842a"/>
<path d="M671 155l-33 214" stroke="#22d42c" stroke-width="1.500"/>
<path d="M637 371l5-2" stroke="#22e42c" stroke-width="2"/>
<path d="M672 153c5-6 13-20 33-29l-19 18-6 8-8 4z" fill="#74304c"/>
<path d="M671 152h4v3h-4z" fill="#fff"/>
<g fill="none" stroke="#10ee28" stroke-width="2" stroke-linejoin="round">
<path d="M681 150c2-15 18-31 34-38l21-5-11 18 5 5-1 3-41 18"/>
<path d="M684 146c10-14 26-27 50-38M681 144l14-4 34-9M685 149l45-20M690 151l38-18M683 142l47-12" stroke-width="1.500"/>
<path d="M700 140l29-11 1 4-40 17" fill="#10ee28" stroke-width="1"/>
<circle cx="685" cy="145" r="3"/><path d="M712 112l6 1M733 106h3v2h-3z" stroke-width="3"/>
</g>
<path d="M687 137c6-8 14-14 22-20" stroke="#5a4050" stroke-width="2" fill="none"/>
<path d="M396 391l-12-18" stroke="#2c2cc8"/><path d="M380 366l9 10-5 3z" fill="#2222dc"/>
<path d="M396 391l18-10" stroke="#c83434"/><path d="M422 376l-7 8-5-3z" fill="#dc2222"/>
<circle cx="398" cy="385" r="2.500" fill="#28d838"/>
<g fill="#e4e8ee" font-size="11"><text x="376" y="362">Z</text><text x="398" y="381">Y</text><text x="426" y="374">X</text></g>
<text x="1095" y="403" font-size="9" font-weight="bold" fill="#444">400</text>
<path d="M1112 397v5h73v-5" fill="none" stroke="#333" stroke-width="1.500"/>
</svg>
</div>
</div>
<div class="lower">
<div class="bar">
<div class="grp"><i class="grip"></i><button title="Mesh"><svg><use href="#gmesh"/></svg></button><i class="car"></i></div>
<div class="grp"><i class="grip"></i>
<button title="Assemblies"><svg><use href="#open"/></svg></button>
<button title="Components"><svg><use href="#f-b"/></svg></button>
<button title="Materials"><svg><use href="#f-i"/></svg></button>
<button title="Properties"><svg><use href="#f-p"/></svg></button>
<button title="Load collectors"><svg><use href="#f-l"/></svg></button>
<button title="Systems"><svg><use href="#f-ax"/></svg></button><i class="car"></i><i class="sep"></i>
<button title="Delete"><svg><use href="#del"/></svg></button>
<button title="Card edit"><svg><use href="#stack"/></svg></button>
<button title="Organize"><svg><use href="#f-org"/></svg></button>
<button title="Renumber"><svg viewBox="0 0 20 20"><path d="M6 3C3 3 3 5 3 8M16 4c2 1 3 3 1 6" stroke="#d22" stroke-width="1.500" fill="none"/><path d="M1 7h5l-3 4zM19 9l-4-1v4z" fill="#d22"/><text x="8" y="6" font-size="7" fill="#222">2</text><text x="8" y="12" font-size="7" fill="#222">1</text><text x="8" y="19" font-size="7" fill="#222">3</text></svg></button></div>
<div class="grp"><i class="grip"></i>
<div class="combo"><svg><use href="#auto"/></svg><select aria-label="Geometry color mode"><option>Auto</option></select></div>
<button title="Wireframe geometry"><svg><use href="#wshell"/></svg></button><i class="car"></i>
<button title="Shaded geometry"><svg><use href="#pshell"/></svg></button><i class="car"></i>
<button title="Transparency"><svg><use href="#pcube"/></svg></button><i class="sep"></i>
<div class="combo"><svg><use href="#comp"/></svg><select aria-label="Element color mode"><option>By Comp</option></select></div>
<button title="Wireframe elements"><svg><use href="#rubik"/></svg></button><i class="car"></i>
<button title="Shaded elements"><svg><use href="#prubik"/></svg></button><i class="car"></i>
<button title="1D elements"><svg><use href="#dash"/></svg></button><i class="car"></i>
<button title="2D elements"><svg><use href="#rhomb"/></svg></button><i class="car"></i>
<button title="Layers"><svg><use href="#slab"/></svg></button><i class="car"></i>
<button title="Shrink"><svg><use href="#shrink"/></svg></button>
<button title="Visual options"><svg><use href="#monitor"/></svg></button></div>
<div class="grp"><i class="grip"></i><button title="Favorites"><svg><use href="#star"/></svg></button></div>
</div>
<div class="bar">
<div class="grp"><i class="grip"></i>
<button title="Automesh"><svg><use href="#qmesh"/></svg></button><i class="car"></i>
<button title="Edit"><svg><use href="#wrench"/></svg></button><i class="sep"></i>
<button title="Back"><svg><use href="#back"/></svg></button>
<button title="Forward"><svg><use href="#fwd"/></svg></button>
<button title="Revert"><svg><use href="#undo"/></svg></button><i class="sep"></i>
<button title="Remove"><svg><use href="#minus"/></svg></button>
<button title="Add"><svg><use href="#plus"/></svg></button>
<button title="Restore"><svg><use href="#undo"/></svg></button></div>
</div>
</div>
<form class="panel">
<div class="modes">
<label><input type="radio" name="m">Tetra mesh</label>
<label><input type="radio" name="m">Tetra remesh</label>
<label><input type="radio" name="m" checked>Volume tetra</label>
<label><input type="radio" name="m">Tetramesh parameters</label>
<label><input type="radio" name="m">Refinement box</label>
</div>
<div class="mid">
<div class="in row">Enclosed volume:</div>
<div class="in row"><button type="button" class="b sm" aria-label="Entity type"><i class="tri"></i></button><button type="button" class="solids">solids</button><button type="button" class="b sm" aria-label="Reset"><svg class="rst" viewBox="0 0 10 10"><path d="M1 0h2v10H1zM10 0v10L4 5z" fill="#111"/></svg></button></div>
<label class="in match"><input type="checkbox">match existing mesh</label>
<div class="gap"></div>
<div class="row"><span class="lb ind">2D type:</span><button type="button" class="b sm" aria-label="2D type"><i class="tri"></i></button><button type="button" class="b wide mixed"><svg viewBox="0 0 16 12"><path d="M1 2h9v9H1zM10 2l4 4.500-4 4.500" fill="none" stroke="#222"/></svg><span>mixed</span></button></div>
<div class="row"><span class="lb ind">3D type:</span><button type="button" class="b sm" aria-label="3D type"><i class="tri"></i></button><button type="button" class="b wide">tetras</button></div>
<div class="row"><span class="lb">element order:</span><button type="button" class="b sm" aria-label="Element order"><i class="tog"></i></button><button type="button" class="b wide">first</button></div>
</div>
<div class="opts">
<label class="ck"><input type="checkbox" checked>Use curvature</label>
<label class="ck"><input type="checkbox" checked>Use proximity</label>
<div class="row"><label class="wl" for="mn">Min elem size:</label><input class="num" id="mn" value="2 . 0 0 0"></div>
<div class="row"><label class="wl" for="fa">Feature angle:</label><input class="num" id="fa" value="3 0 . 0 0 0"></div>
<div class="row"><label class="nl" for="es">Element size:</label><input class="num" id="es" value="4 . 0 0 0"></div>
<label class="ck"><input type="checkbox" checked>Cleanup elements</label>
<div class="row"><button type="button" class="b sm" aria-label="Destination"><i class="tog"></i></button><button type="button" class="b elems">Elems to Current Comp</button></div>
</div>
<div class="acts">
<button type="button" class="go">mesh</button><button type="button" class="go">reject</button><button type="button" class="go">mesh to file</button>
<button type="button" class="ret">return</button>
</div>
</form>
</section>
</main>

<footer class="status"><span class="msg">Tetramesh</span><span class="cell s1"></span><span class="cell s2">Model</span><span class="cell s3"><i></i>VOLUME TIP B</span><span class="cell s4"><i class="dr"></i>PRESSURE</span></footer>

<div class="task">
<button class="start" title="Start"><svg viewBox="0 0 16 16"><path d="M1 3l6-1v5.500H1zM8 2l7-1v6.500H8zM1 8.500h6V14l-6-1zM8 8.500h7V15l-7-1z" fill="#fff"/></svg></button>
<div class="find"><svg viewBox="0 0 18 18"><circle cx="11" cy="7" r="5" fill="none" stroke="#ddd" stroke-width="1.500"/><path d="M7 11l-5 5" stroke="#ddd" stroke-width="1.500"/></svg><input placeholder="Scrivi qui per eseguire la ricerca" aria-label="Scrivi qui per eseguire la ricerca"></div>
<button title="Task view"><svg viewBox="0 0 20 20"><path d="M4 3v3h8V3M4 17v-3h8v3M4 8h8v4H4zM16 3v3M16 8v9" fill="none" stroke="#ccc" stroke-width="1.500"/></svg></button>
<button title="Remote desktop"><svg viewBox="0 0 20 20"><path d="M5 2l9 3 2 8-9-2z" fill="#4aa4e4"/><path d="M4 15l6-2 7 2-7 3z" fill="#a8cce0"/></svg></button>
<button title="Transfer"><svg viewBox="0 0 20 20"><path d="M2 2h10l2 3h4v13H6v-4H2z" fill="#2cc4e8"/><path d="M5 9h6V6l5 4-5 5v-3H5z" fill="#fff"/></svg></button>
<button title="Store"><svg viewBox="0 0 20 20"><path d="M1 6h18v13H1z" fill="#f4f4f4"/><path d="M7 6V2h6v4" stroke="#f4f4f4" fill="none"/><path d="M6 8h4v4H6z" fill="#e44"/><path d="M10 8h4v4h-4z" fill="#4a4"/><path d="M6 12h4v4H6z" fill="#38d"/><path d="M10 12h4v4h-4z" fill="#fb2"/></svg></button>
<button title="Chrome" class="run"><svg viewBox="0 0 20 20"><circle cx="10" cy="10" r="9" fill="#e04434"/><path d="M2 6l8 13A9 9 0 0 1 2 6z" fill="#35a853"/><path d="M19 7a9 9 0 0 1-9 12l4-8V7z" fill="#fbc22c"/><circle cx="10" cy="10" r="4.500" fill="#fff"/><circle cx="10" cy="10" r="3.500" fill="#4684ee"/></svg></button>
<button title="Editor"><svg viewBox="0 0 20 20"><path d="M2 3h16v14H2z" fill="#c8d4e4"/><path d="M2 3h4v12H2z" fill="#d86a34"/><path d="M14 3h4v12h-4z" fill="#5580c0"/><path d="M7 1h2l2 17H9zM10 1h3l-2 17z" fill="#622" stroke="#eee" stroke-width=".5"/></svg></button>
<button title="Designer"><svg viewBox="0 0 20 20"><path d="M3 1h14v18H3z" fill="#7c1414"/><path d="M7 13V5h6v7H8M7 17h7" stroke="#2c0808" stroke-width="2" fill="none"/></svg></button>
<button title="HyperMesh" class="run act"><svg viewBox="0 0 20 20"><circle cx="10" cy="10" r="9" fill="#f4f4f4"/><path d="M2 13l6-6 4 5 3-2 4 4M4 6l6-3 7 6" fill="none" stroke="#555" stroke-width="2"/></svg></button>
<button title="Cleaner"><svg viewBox="0 0 20 20"><path d="M16 7A7 7 0 1 0 17 14" fill="none" stroke="#d43a24" stroke-width="5"/><path d="M14 1l-4 8-6 2-2 5 7-1 4-5z" fill="#b8b8c0"/></svg></button>
<button title="Explorer" class="run"><svg viewBox="0 0 20 20"><path d="M1 3h7l2 2h9v12H1z" fill="#f8d06a"/><path d="M4 10h12v8h-3v-4H7v4H4z" fill="#4a9ad8"/></svg></button>
<button title="HyperView" class="run"><svg viewBox="0 0 20 20"><path d="M3 5l5-1v13H3z" fill="#2244dd"/><path d="M7 4l5-1-1 14H6z" fill="#22cc44"/><path d="M12 3l5-1-1 7h-5z" fill="#e8e022"/><path d="M11 9h5l-1 6-5 2z" fill="#e03322"/></svg></button>
<span class="fill"></span>
<div class="tray">
<svg viewBox="0 0 16 16"><circle cx="8" cy="8" r="7" fill="#2a8ad4" stroke="#cde"/><text x="5" y="12" font-size="10" font-weight="bold" fill="#fff">?</text></svg>
<svg viewBox="0 0 16 16"><path d="M3 10l5-5 5 5" fill="none" stroke="#ddd"/></svg>
<svg viewBox="0 0 16 16"><path d="M2 6h10v6H2zM12 8h2v2M9 6V3M11 6V3" fill="none" stroke="#ddd"/></svg>
<svg viewBox="0 0 16 16"><path d="M3 13A10 10 0 0 1 13 3M6 13a7 7 0 0 1 7-7M9 13a4 4 0 0 1 4-4" fill="none" stroke="#ddd"/><path d="M11 13h2v-2z" fill="#ddd"/></svg>
<svg viewBox="0 0 16 16"><path d="M2 6h2l4-3v10l-4-3H2z" fill="none" stroke="#ddd"/><path d="M10 6c1 1 1 3 0 4M12 4c2 2 2 6 0 8" fill="none" stroke="#ddd"/></svg>
<svg viewBox="0 0 16 16"><path d="M3 10l8-8 2 2-8 8H3zM2 14c3-3 5 1 9-2" fill="none" stroke="#ddd"/></svg>
</div>
<div class="clock"><span>12:03</span><span>16/05/2020</span></div>
<button class="note" title="Notifications"><svg viewBox="0 0 16 16"><path d="M2 2h12v9H9l-2 3v-3H2z" fill="none" stroke="#ddd"/></svg></button>
</div>
</body>
</html>
```
FILE: styles.css
```css
* { box-sizing: border-box; }
body {
  margin: 0; height: 100vh; display: flex; flex-direction: column;
  background: #f0f0f0; color: #333; overflow: hidden;
  font: 11px/14px "Liberation Sans", sans-serif;
}
button, input, select { font: inherit; color: inherit; margin: 0; padding: 0; border: 0; background: none; }
svg { flex: none; }
.defs { position: absolute; width: 0; height: 0; }
.fill { flex: 1; }

.bars { display: flex; flex-direction: column; gap: 6px; height: 50px; flex: none; }
.bar { display: flex; gap: 3px; height: 20px; align-items: center; }
.grp { display: flex; align-items: center; }
.grp button, .vbar button, .tools button, .views button, .pager button {
  width: 22px; height: 20px; display: flex; align-items: center; justify-content: center; flex: none;
}
.grp svg, .vbar svg, .views svg, .tools svg, .pager svg { width: 20px; height: 20px; overflow: visible; }
.axes text { font-size: 7px; font-weight: bold; fill: #333; }
.grip { width: 7px; height: 20px; flex: none; background: radial-gradient(circle at 5px 2px, #444 1px, transparent 1px) 0 0 / 7px 5px; }
.g1 { width: 5px; }
.car { width: 8px; flex: none; display: flex; justify-content: center; }
.car::before { content: ""; border: 2px solid transparent; border-top: 3px solid #222; border-bottom: 0; }
.wide.car { width: 12px; }
.dim { opacity: .25; }
.flip { transform: scaleX(-1); }
.sep { width: 7px; height: 16px; flex: none; background: linear-gradient(#ccc, #ccc) center / 1px 100% no-repeat; }
.pager { margin-left: auto; display: flex; align-items: center; padding-right: 17px; font: 9px/12px "Roboto", sans-serif; }
.pager input { width: 29px; height: 15px; border: 1px solid #555; background: #fff; text-align: right; padding-right: 3px; margin-right: 2px; }

.work { flex: 1; min-height: 0; display: flex; }
.side { width: 341px; flex: none; padding: 2px 5px 3px 2px; display: flex; flex-direction: column; font: 9px/13px "Roboto", sans-serif; color: #222; }
.tabs { display: flex; height: 16px; }
.tabs button { border-right: 1px solid #ddd; border-top: 1px solid #e2e2e2; padding: 0 3px; text-align: left; min-width: 37px; white-space: nowrap; }
.tabs button:first-child { width: 46px; }
.tabs .on { background: #fff; width: 41px; padding: 0 2px; display: flex; align-items: center; justify-content: space-between; }
.tabs svg { width: 8px; height: 8px; }
.tabs button:last-child { width: 59px; padding: 0 2px; }
.views { display: flex; height: 24px; align-items: center; border: 1px solid #e4e4e4; border-left: 0; padding-left: 2px; }
.views .on, .vbar .on { background: #fac88c; border: 1px solid #e0a868; }
.search { display: flex; align-items: center; height: 20px; gap: 5px; }
.sbox { display: flex; align-items: center; width: 317px; height: 20px; border: 1px solid #8a8a8a; background: #fff; padding-right: 3px; }
.sbox input { flex: 1; height: 16px; padding-left: 2px; outline: 0; }
.sbox input::placeholder { color: #777; }
.m { width: 15px; height: 15px; }
.v { width: 8px; height: 8px; margin-left: 3px; }
.tools { display: flex; align-items: center; height: 26px; padding: 0 2px; }
.tree { flex: 1; min-height: 0; display: flex; background: #fff; padding-bottom: 3px; }
.tree table { width: 322px; height: 100%; border-collapse: collapse; table-layout: fixed; }
.tree th { height: 16px; padding: 0 2px; font-weight: normal; text-align: left; background: linear-gradient(#fdfdfd, #dcdcdc); border-right: 1px solid #ccc; border-bottom: 1px solid #ccc; }
.tree th:last-child { border-right: 0; }
.tree .c1 { width: 210px; }
.tree .c2 { width: 20px; text-align: right; }
.tree .c3 { width: 19px; }
.tree .c4 { width: 31px; padding: 0; text-align: center; }
.tree th svg { width: 11px; height: 11px; display: block; margin-left: 1px; }
.tree td { padding: 0; line-height: 13px; border-bottom: 1px solid #f0f2f4; text-align: right; white-space: nowrap; }
.tree td:nth-child(2) { padding-right: 3px; }
.tree td:nth-child(3) { padding-left: 3px; }
.tree td:nth-child(4) { padding-right: 3px; }
.tree td:first-child { text-align: left; background: repeating-linear-gradient(#aaa 0 1px, transparent 1px 2px) 7px 0 / 1px 100% no-repeat; }
.tree td.k { padding-left: 34px; background: repeating-linear-gradient(#aaa 0 1px, transparent 1px 2px) 7px 0 / 1px 100% no-repeat, repeating-linear-gradient(#aaa 0 1px, transparent 1px 2px) 23px 0 / 1px 100% no-repeat, linear-gradient(#bbb, #bbb) 24px 50% / 7px 1px no-repeat; }
.tree td.last { background-size: 1px 100%, 1px 50%, 7px 1px; }
.tree td.first { background-position: 7px 7px; }
.p svg { width: 14px; height: 13px; vertical-align: top; margin: 0 2px 0 5px; }
.k svg { width: 12px; height: 12px; vertical-align: top; margin: 1px 2px 0 0; }
.k svg + svg { margin-right: 3px; }
.cur { font-weight: bold; color: #000; }
.box { display: inline-block; vertical-align: top; width: 8px; height: 8px; margin: 3px 0 0 4px; border: 1px solid #999; background: linear-gradient(#555, #555) center / 4px 1px no-repeat, linear-gradient(#555, #555) center / 1px 4px no-repeat, #fff; }
.box.open { background: linear-gradient(#555, #555) center / 4px 1px no-repeat, #fff; }
.sw { display: block; width: 11px; height: 11px; border: 1px solid #666; border-radius: 2px; background-color: #fff; box-shadow: inset 1px 0 #ffffff70; }
.yel { background: #f2ea22; } .lil { background: #9484ee; } .red { background: #ee1a10; } .pur { background: #7a3082; }
.grn { background: #1ce61c; } .ora { background: #dc9a22; } .blu { background: #1818ee; } .gry { background: #969696; } .cor { background: #ee3a30; }
.scroll { width: 12px; display: flex; flex-direction: column; align-items: center; background: #f0f0f0; padding: 3px 0 1px; gap: 3px; }
.scroll svg { width: 8px; height: 8px; }
.thumb { width: 12px; flex: 1; margin-bottom: 27px; background: #cdcdcd; }
.split { height: 8px; display: flex; justify-content: flex-end; align-items: center; padding-right: 11px; }
.split svg { width: 8px; height: 4px; }
.props { height: 68px; background: #fff; border: 1px solid #ccc; }
.ph { display: flex; height: 15px; background: linear-gradient(#fafafa, #dcdcdc); border-bottom: 1px solid #ccc; }
.ph span { padding-left: 1px; border-right: 1px solid #ccc; width: 28px; }
.ph span + span { border: 0; }

.right { flex: 1; min-width: 0; margin-right: 2px; display: flex; flex-direction: column; border: solid #a8a8a8; border-width: 0 2px 0 2px; padding: 0 4px 0 1px; }
.stage { flex: 1; min-height: 0; display: flex; padding-top: 12px; }
.vbar { width: 25px; flex: none; display: flex; flex-direction: column; gap: 2px; }
.hgrip { height: 8px; margin: 0 3px; flex: none; background: radial-gradient(circle at 3px 4px, #444 1px, transparent 1px) 0 0 / 5px 8px; }
.vbar svg { width: 18px; height: 18px; }
.view { flex: 1; min-width: 0; position: relative; border: 2px solid #66dce0; background: linear-gradient(#2e5a86, #63798f 50%, #a0a0a0); }
.scene { width: 100%; height: 100%; display: block; }
.info { position: absolute; top: 4px; right: 4px; margin: 0; color: #e4ecf4; }
.lower { flex: none; padding: 2px 0 6px; display: flex; flex-direction: column; gap: 5px; border-bottom: 1px solid #aaa; }
.combo { display: flex; align-items: center; width: 76px; height: 18px; background: linear-gradient(#f0f0f0, #f0f0f0) right / 10px 100% no-repeat, #fff; }
.sep + .combo { width: 82px; }
.combo svg { width: 15px; height: 15px; margin-right: 1px; }
.combo select { flex: 1; min-width: 0; height: 18px; appearance: none; font: 10px/18px "Roboto", sans-serif; color: #222; }
.combo::after { content: ""; border: 3px solid transparent; border-top: 4px solid #111; border-bottom: 0; margin-right: 1px; }

.panel { flex: none; display: flex; height: 127px; padding: 10px 11px 0 8px; border-bottom: 1px solid #aaa; margin-bottom: 6px; }
.modes { width: 160px; }
.modes label, .ck, .match { display: flex; align-items: center; height: 16px; }
input[type=radio] { appearance: none; width: 9px; height: 9px; border-radius: 50%; border: 1px solid; border-color: #444 #fff #fff #444; background: #fff; margin-right: 8px; }
input[type=radio]:checked { background: radial-gradient(#111 2px, #fff 2px); }
input[type=checkbox] { appearance: none; width: 11px; height: 11px; border: 1px solid; border-color: #666 #fff #fff #666; background: #fff; display: grid; place-items: center; margin-right: 6px; }
input[type=checkbox]:checked::before { content: ""; width: 7px; height: 4px; border: solid #111; border-width: 0 0 2px 2px; transform: rotate(-45deg) translate(1px, -1px); }
.mid { width: 236px; }
.mid > *, .opts > * { height: 16px; }
.in { padding-left: 24px; }
.match { padding-left: 31px; }
.row { display: flex; align-items: center; }
.b { height: 16px; border: solid; border-width: 1px 2px 2px 1px; border-color: #fff #888 #888 #fff; background: #f0f0f0; display: flex; align-items: center; justify-content: center; line-height: 12px; }
.sm { width: 23px; }
.solids { width: 142px; height: 16px; border: 2px solid #5fdcc4; background: #e8e052; line-height: 12px; }
.rst { width: 9px; height: 9px; }
.tri { border: 5px solid transparent; border-top: 5px solid #111; border-bottom: 0; }
.tog { width: 6px; height: 9px; background: #222; clip-path: polygon(50% 0, 100% 44%, 0 44%, 0 56%, 100% 56%, 50% 100%, 0 56%, 0 44%); }
.lb { width: 83px; }
.ind { padding-left: 24px; }
.wide.b { width: 130px; }
.mixed svg { width: 16px; height: 12px; }
.mixed span { flex: 1; padding-right: 14px; }
.opts { width: 258px; margin-left: 58px; }
.ck { padding-left: 7px; }
.wl { width: 141px; }
.nl { width: 71px; }
.num { width: 117px; height: 16px; border: solid #777; border-width: 1px 0 0 2px; background: #fff; font: 10px/12px "Liberation Mono", monospace; text-align: right; padding-right: 4px; }
.elems { flex: none; width: 165px; }
.acts { margin-left: auto; display: flex; flex-direction: column; width: 94px; align-items: flex-end; }
.go { width: 94px; height: 16px; background: #5cc45c; border: solid; border-width: 1px 2px 2px 1px; border-color: #8fdc8f #357a35 #357a35 #8fdc8f; line-height: 12px; }
.ret { width: 71px; height: 16px; margin-top: 47px; background: #c85858; border: 2px solid #5c1c1c; line-height: 10px; }

.status { flex: none; height: 15px; display: flex; align-items: center; font: 9px/12px "Roboto", sans-serif; color: #222; }
.msg { flex: 1; padding-left: 3px; }
.cell { height: 13px; border: solid #666; border-width: 1px 0 0 1px; padding-left: 2px; display: flex; align-items: center; margin-right: 2px; }
.s1 { width: 73px; } .s2 { width: 74px; } .s3 { width: 84px; padding-left: 4px; } .s4 { width: 86px; padding-left: 4px; margin: 0; }
.cell i { width: 6px; height: 6px; background: #6c2c6c; border: 1px solid #333; margin-right: 3px; }
.cell .dr { background: #8c1414; }

.task { flex: none; height: 31px; display: flex; background: #2a2927; color: #e4e4e4; font: 11px/15px "Open Sans", "Noto Sans", sans-serif; }
.task button { width: 39px; display: flex; align-items: center; justify-content: center; border-bottom: 2px solid transparent; }
.task button svg { width: 19px; height: 19px; }
.task .start { width: 37px; }
.task .start svg { width: 15px; height: 15px; }
.task .run { border-color: #e0909c; }
.task .act { background: #636363; }
.find { width: 269px; background: #343434; border: 1px solid #555; display: flex; align-items: center; padding-left: 8px; }
.find svg { width: 17px; height: 17px; margin-right: 9px; }
.find input { flex: 1; outline: 0; height: 20px; font: 11px/18px "Noto Sans", sans-serif; }
.find input::placeholder { color: #c4c4c4; }
.tray { display: flex; gap: 10px; align-items: center; }
.tray svg { width: 15px; height: 15px; }
.clock { width: 74px; display: flex; flex-direction: column; text-align: center; font-size: 9px; line-height: 14px; justify-content: center; }
.task .note { width: 27px; margin-right: 7px; }
.task .note svg { width: 15px; height: 15px; }
```
